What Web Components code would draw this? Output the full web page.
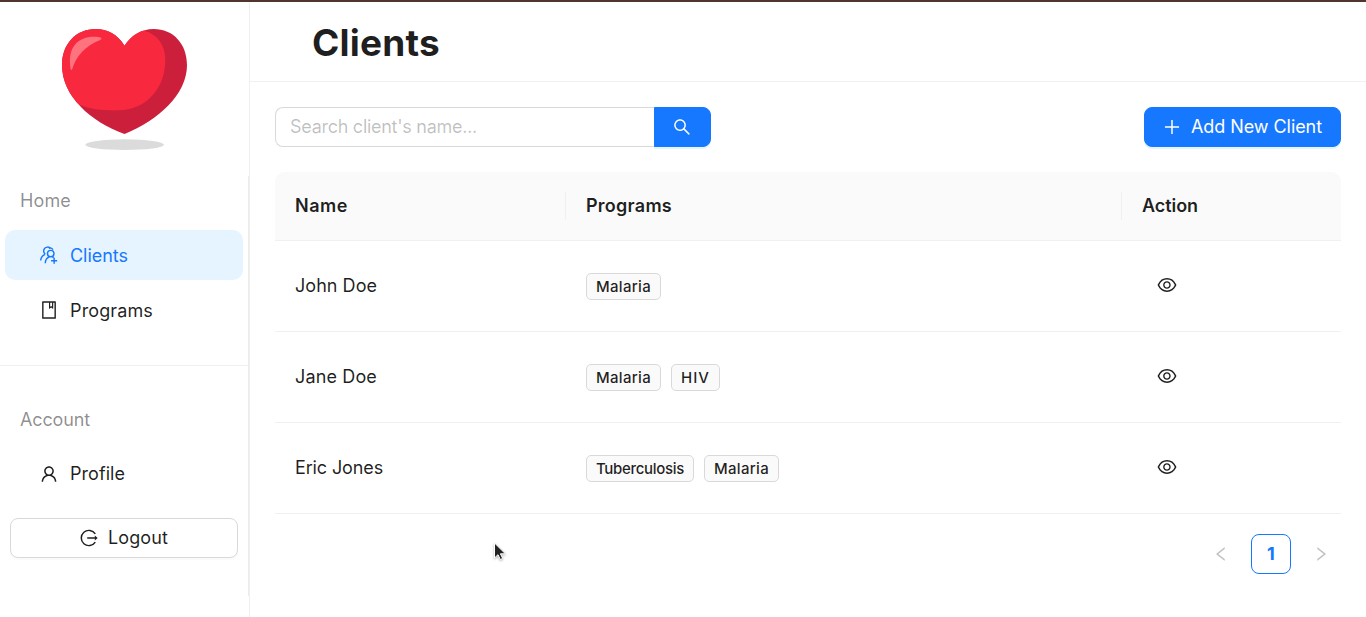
<!DOCTYPE html>
<html lang="en">
<head>
<meta charset="utf-8">
<title>Clients</title>
<style>
html,body{margin:0;height:100%}
body{overflow:hidden;background:#fff;color:rgba(0,0,0,.88);font:18px/28px Inter,"Open Sans",sans-serif}
</style>
</head>
<body>
<clinic-app></clinic-app>
<script>
const ICONS = {
  search:'<path d="M909.6 854.5L649.9 594.8C690.2 542.7 712 479 712 412c0-80.2-31.3-155.4-87.9-212.1-56.6-56.7-132-87.9-212.1-87.9s-155.5 31.3-212.1 87.9C143.2 256.5 112 331.8 112 412c0 80.1 31.3 155.5 87.9 212.1C256.5 680.8 331.8 712 412 712c67 0 130.6-21.8 182.7-62l259.7 259.6a8.2 8.2 0 0011.6 0l43.6-43.5a8.2 8.2 0 000-11.6zM570.4 570.4C528 612.7 471.8 636 412 636s-116-23.3-158.4-65.6C211.3 528 188 471.8 188 412s23.3-116.1 65.6-158.4C296 211.3 352.2 188 412 188s116.1 23.2 158.4 65.6S636 352.2 636 412s-23.3 116.1-65.6 158.4z"/>',
  left:'<path d="M724 218.3V141c0-6.7-7.7-10.4-12.9-6.3L260.3 486.8a31.86 31.86 0 000 50.3l450.8 352.1c5.3 4.1 12.9.4 12.9-6.3v-77.3c0-4.9-2.3-9.6-6.1-12.6l-360-281 360-281.1c3.8-3 6.1-7.7 6.1-12.6z"/>',
  right:'<path transform="translate(1024 0) scale(-1 1)" d="M724 218.3V141c0-6.7-7.7-10.4-12.9-6.3L260.3 486.8a31.86 31.86 0 000 50.3l450.8 352.1c5.3 4.1 12.9.4 12.9-6.3v-77.3c0-4.9-2.3-9.6-6.1-12.6l-360-281 360-281.1c3.8-3 6.1-7.7 6.1-12.6z"/>',
  eye:'<path d="M942.2 486.2C847.4 286.5 704.1 186 512 186c-192.2 0-335.4 100.5-430.2 300.3a60.3 60.3 0 000 51.5C176.6 737.5 319.9 838 512 838c192.2 0 335.4-100.5 430.2-300.3 7.7-16.2 7.7-35 0-51.5zM512 766c-161.3 0-279.4-81.8-362.7-254C232.6 339.8 350.7 258 512 258c161.3 0 279.4 81.8 362.7 254C791.5 684.2 673.4 766 512 766zm-4-430c-97.2 0-176 78.8-176 176s78.8 176 176 176 176-78.8 176-176-78.8-176-176-176zm0 288c-61.9 0-112-50.1-112-112s50.1-112 112-112 112 50.1 112 112-50.1 112-112 112z"/>',
  user:'<path d="M858.5 763.6a374 374 0 00-80.6-119.5 375.63 375.63 0 00-119.5-80.6c-.4-.2-.8-.3-1.2-.5C719.5 518 760 444.7 760 362c0-137-111-248-248-248S264 225 264 362c0 82.7 40.5 156 102.8 201.1-.4.2-.8.3-1.2.5-44.8 18.9-85 46-119.5 80.6a375.63 375.63 0 00-80.6 119.5A371.7 371.7 0 00136 901.8a8 8 0 008 8.2h60c4.4 0 7.9-3.5 8-7.8 2-77.2 33-149.5 87.8-204.3 56.7-56.7 132-87.9 212.2-87.9s155.5 31.2 212.2 87.9C779 752.7 810 825 812 902.2c.1 4.4 3.6 7.8 8 7.8h60a8 8 0 008-8.2c-1-47.8-10.9-94.3-29.5-138.2zM512 534c-45.9 0-89.1-17.9-121.6-50.4S340 407.9 340 362c0-45.9 17.9-89.1 50.4-121.6S466.1 190 512 190s89.1 17.9 121.6 50.4S684 316.1 684 362c0 45.9-17.9 89.1-50.4 121.6S557.9 534 512 534z"/>',
  plus:'<path d="M474 152h76v322h322v76H550v322h-76V550H152v-76h322z"/>',
  book:'<path d="M832 64H192c-17.7 0-32 14.3-32 32v832c0 17.7 14.3 32 32 32h640c17.7 0 32-14.3 32-32V96c0-17.7-14.3-32-32-32zm-260 72h96v209.9L621.5 312 572 347.4V136zm220 752H232V136h280v296.9c0 3.3 1 6.6 3 9.3a15.9 15.9 0 0022.3 3.7l83.8-59.9 81.4 59.4c2.7 2 6 3.1 9.4 3.1 8.8 0 16-7.2 16-16V136h64v752z"/>',
  logout:'<path d="M834 300a390 390 0 100 424" fill="none" stroke="currentColor" stroke-width="76"/><path d="M420 474h390v-90l145 128-145 128v-90H420z"/>',
  group:'<g fill="none" stroke="currentColor" stroke-width="74"><circle cx="600" cy="440" r="165"/><path d="M320 930c5-145 75-265 210-320M680 600l70 45M620 805h310M775 650v310"/><path d="M590 185C525 75 320 75 255 225c-35 95-5 185 65 245M310 475C175 540 95 645 85 790M500 165c75-35 160-5 215 75"/></g>'
};
function define(name, css, html, init){
  const t=document.createElement('template');
  t.innerHTML='<style>'+css+'</style>'+html;
  customElements.define(name, class extends HTMLElement{
    constructor(){super();this.attachShadow({mode:'open'}).append(t.content.cloneNode(true));}
    connectedCallback(){if(init)init(this,this.shadowRoot);}
  });
}
define('ui-icon',':host{display:inline-flex;flex:none}svg{display:block;width:var(--icon,20px);height:var(--icon,20px);fill:currentColor}','<svg viewBox="0 0 1024 1024" aria-hidden="true"></svg>',(h,r)=>{r.querySelector('svg').innerHTML=ICONS[h.getAttribute('name')]||''});

/* One-line label whose tracking is spread to fill its "w" width. */
const pen=document.createElement('canvas').getContext('2d');
define('ui-label',':host{display:inline-block;white-space:nowrap;flex:none}','<slot></slot>',h=>{
  const size=h.getAttribute('size')||18, weight=h.getAttribute('weight')||400, w=+h.getAttribute('w');
  const text=h.textContent;
  pen.font=`${weight} ${size}px Inter`;
  h.style.fontSize=size+'px';h.style.fontWeight=weight;
  h.style.letterSpacing=((w-pen.measureText(text).width)/text.length).toFixed(3)+'px';
  h.style.width=w+'px';
});

define('brand-heart',':host{display:block;height:170px}svg{display:block}',`
<svg width="249" height="170" viewBox="-150 6 747 510" aria-hidden="true">
<defs><clipPath id="c"><path d="M223.500 137C202 102 172 87 137 87C78 87 36 132 36 195C36 289 122 365 223.500 402C326 360 411 283 411 195C411 132 370 87 311 87C274 87 244 106 223.500 137Z"/></clipPath></defs>
<g clip-path="url(#c)"><rect x="30" y="80" width="390" height="330" fill="#cc1f3b"/>
<path d="M30 80H270L283 92C320 102 346 132 346 180C346 263 290 331 205 331C165 332 128 329 98 318L30 290Z" fill="#f8283f"/></g>
<path d="M66 209C77 171 107 136 149 121C158 117 155 112 145 111C87 105 58 138 60 188C60 196 61 203 62 207C63 210 65 211 66 209Z" fill="#ff737f"/>
<ellipse cx="224" cy="434" rx="118" ry="16" fill="#dbdbdb"/></svg>`);

define('menu-item',`:host{display:flex;align-items:center;height:50px;margin:0 5px;padding-left:34px;gap:11px;border-radius:10px;box-sizing:border-box}
:host([selected]){background:#e6f4ff;color:#1677ff}`,'<ui-icon></ui-icon><slot></slot>',(h,r)=>{const i=r.querySelector('ui-icon');i.setAttribute('name',h.getAttribute('icon'));i.connectedCallback()});

define('ui-button',`:host{display:flex;align-items:center;justify-content:center;gap:9px;height:40px;box-sizing:border-box;border:1px solid #d9d9d9;border-radius:8px;background:#fff;box-shadow:0 2px 0 rgba(0,0,0,.02)}
:host([primary]){background:#1677ff;border-color:#1677ff;color:#fff;box-shadow:0 2px 0 rgba(5,145,255,.1)}`,'<slot></slot>');

define('side-bar',`:host{display:flex;flex-direction:column;width:249px;flex:none;border-right:1px solid #f0f0f0}
nav{margin-top:4px;height:420px;box-sizing:border-box;border-right:1px solid #ececec}
.group{color:rgba(0,0,0,.45);height:50px;padding:11px 20px 0;box-sizing:border-box}
.first{margin-bottom:4px}
hr{border:0;height:1px;background:#f0f0f0;margin:30px 0 29px}
menu-item+menu-item{margin-top:5px}
.home ui-label{margin-top:2px}
.account{margin-top:4px}
ui-button{margin:19px 10px 0;padding-right:1px}`,`<brand-heart></brand-heart>
<nav><div class="group first"><ui-label w="51">Home</ui-label></div>
<menu-item class="home" icon="group" selected><ui-label w="58">Clients</ui-label></menu-item>
<menu-item class="home" icon="book"><ui-label w="83">Programs</ui-label></menu-item>
<hr><div class="group"><ui-label w="70">Account</ui-label></div>
<menu-item class="account" icon="user"><ui-label w="55">Profile</ui-label></menu-item>
<ui-button><ui-icon name="logout"></ui-icon><ui-label w="60">Logout</ui-label></ui-button></nav>`);

define('search-box',`:host{display:flex;width:436px;height:40px}
.field{flex:1;box-sizing:border-box;border:1px solid #d9d9d9;border-right:0;border-radius:8px 0 0 8px;padding:5px 14px;color:rgba(0,0,0,.25)}
ui-button{width:57px;border-radius:0 8px 8px 0;padding:0 1px 1px 0}`,`<div class="field"><ui-label w="187">Search client's name...</ui-label></div><ui-button primary><ui-icon name="search"></ui-icon></ui-button>`);

define('program-tag',':host{display:block;box-sizing:border-box;height:27px;line-height:25px;border:1px solid #d9d9d9;border-radius:5px;background:#fafafa;padding:0 9px}::slotted(ui-label){display:block}','<slot></slot>');

define('client-row',`:host{display:grid;grid-template-columns:291px 556px 1fr;height:91px;box-sizing:border-box;border-bottom:1px solid #f0f0f0;align-items:center}
.name{padding-left:20px}.tags{display:flex;gap:10px;padding:1px 0 0 20px}.act{padding:0 0 2px 34px;--icon:22px;display:flex}`,
'<div class="name"><slot name="name"></slot></div><div class="tags"><slot></slot></div><div class="act"><ui-icon name="eye"></ui-icon></div>');

define('client-table',`:host{display:block}
.head{display:grid;grid-template-columns:291px 556px 1fr;height:69px;box-sizing:border-box;background:#fafafa;border-bottom:1px solid #f0f0f0;border-radius:10px 10px 0 0;align-items:center}
.head div{height:28px;line-height:27px;padding-left:20px;border-right:1px solid #f0f0f0}.head div:last-child{border:0}`,
`<div class="head"><div><ui-label weight="600" w="53">Name</ui-label></div><div><ui-label weight="600" w="86">Programs</ui-label></div><div><ui-label weight="600" w="56">Action</ui-label></div></div><slot></slot>`);

define('page-nav',`:host{display:flex;justify-content:flex-end;gap:10px;margin-top:20px;color:rgba(0,0,0,.25)}
span{width:40px;height:40px;box-sizing:border-box;display:flex;align-items:center;justify-content:center;--icon:18px}
.on{border:1px solid #1677ff;border-radius:8px;color:#1677ff;font-weight:700}`,'<span><ui-icon name="left"></ui-icon></span><span class="on">1</span><span><ui-icon name="right"></ui-icon></span>');

define('mouse-pointer',':host{position:absolute;left:492px;top:539px}svg{display:block;filter:drop-shadow(0 1px 1px rgba(0,0,0,.3))}','<svg width="16" height="22" viewBox="0 0 16 22"><path d="M2.500 2v15l3.500-3.300 2.300 4.800 2.400-1.100-2.300-4.600h5z" fill="#222" stroke="#fff" stroke-width="1"/></svg>');

define('clinic-app',`:host{display:flex;height:617px;box-sizing:border-box;border-top:2px solid #52342e;position:relative}
main{flex:1;min-width:0}
header{height:80px;box-sizing:border-box;border-bottom:1px solid #f0f0f0;padding:17px 0 0 62px;line-height:48px}
.body{padding:25px 25px 0}
.tools{display:flex;justify-content:space-between;margin-bottom:25px}
.add{width:197px;padding-right:1px}`,`<side-bar></side-bar><main><header><ui-label size="37" weight="700" w="128">Clients</ui-label></header>
<div class="body"><div class="tools"><search-box></search-box><ui-button class="add" primary><ui-icon name="plus"></ui-icon><ui-label w="131">Add New Client</ui-label></ui-button></div>
<client-table>
<client-row><ui-label slot="name" w="82">John Doe</ui-label><program-tag><ui-label size="15" weight="500" w="55">Malaria</ui-label></program-tag></client-row>
<client-row><ui-label slot="name" w="82">Jane Doe</ui-label><program-tag><ui-label size="15" weight="500" w="55">Malaria</ui-label></program-tag><program-tag><ui-label size="15" weight="500" w="29">HIV</ui-label></program-tag></client-row>
<client-row><ui-label slot="name" w="88">Eric Jones</ui-label><program-tag><ui-label size="15" weight="500" w="88">Tuberculosis</ui-label></program-tag><program-tag><ui-label size="15" weight="500" w="55">Malaria</ui-label></program-tag></client-row>
</client-table><page-nav></page-nav></div></main><mouse-pointer></mouse-pointer>`);
</script>
</body>
</html>
